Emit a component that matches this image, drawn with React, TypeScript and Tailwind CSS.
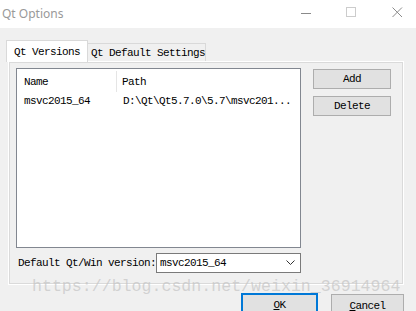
import React from "react";

const mono = "font-['Liberation_Mono',monospace] text-[11px] tracking-[-0.6px] text-black leading-[12px] whitespace-nowrap";

export default function App() {
  return (
    <div className="w-[416px] h-[311px] bg-[#f0f0f0] relative overflow-hidden">
      {/* Title bar */}
      <div className="h-[28px] bg-white flex items-center relative">
        <span className="ml-[2px] font-['Noto_Sans',sans-serif] text-[12px] text-[#999999] leading-none">Qt Options</span>
        <svg className="absolute left-[301px] top-[8px]" width="11" height="11" viewBox="0 0 11 11">
          <line x1="0" y1="5.5" x2="10" y2="5.5" stroke="#8a8a8a" strokeWidth="1" />
        </svg>
        <svg className="absolute left-[346px] top-[7px]" width="11" height="11" viewBox="0 0 11 11">
          <rect x="0.5" y="0.5" width="9" height="9" fill="none" stroke="#cccccc" strokeWidth="1" />
        </svg>
        <svg className="absolute left-[392px] top-[7px]" width="11" height="11" viewBox="0 0 11 11">
          <path d="M0.5 0.5 L10 10 M10 0.5 L0.5 10" stroke="#8a8a8a" strokeWidth="1" fill="none" />
        </svg>
      </div>

      <div className="pt-[12px] pl-[6px]">
        {/* Tabs */}
        <div className="flex items-end h-[22px] relative z-10">
          <div className={`w-[82px] h-[22px] bg-white border border-b-0 border-[#d9d9d9] flex items-center pl-[7px] pt-[1px] ${mono}`}>
            Qt Versions
          </div>
          <div className={`w-[118px] h-[18px] mb-[1px] bg-[#f0f0f0] border border-l-0 border-b-0 border-[#d9d9d9] flex items-center pl-[3px] pt-[1px] ${mono}`}>
            Qt Default Settings
          </div>
        </div>

        {/* Pane */}
        <div className="ml-[2px] mt-[-1px] w-[396px] h-[224px] border border-white outline outline-1 outline-[#dadada] -outline-offset-2 bg-[#f0f0f0] pl-[7px] pt-[6px]">
          <div className="flex">
            <div className="w-[285px] h-[180px] border border-[#828790] bg-white">
              <div className={`flex h-[21px] mt-[2px] items-center ${mono}`}>
                <div className="w-[100px] h-full border-r border-[#e5e5e5] flex items-center pl-[7px]">Name</div>
                <div className="pl-[5px]">Path</div>
              </div>
              <div className={`flex h-[18px] items-center ${mono}`}>
                <div className="w-[101px] pl-[7px]">msvc2015_64</div>
                <div className="pl-[5px]">D:\Qt\Qt5.7.0\5.7\msvc201...</div>
              </div>
            </div>
            <div className="ml-[12px] pt-[1px] flex flex-col gap-[7px]">
              <div className={`w-[78px] h-[20px] bg-[#e1e1e1] border border-[#adadad] flex items-center justify-center ${mono}`}>Add</div>
              <div className={`w-[78px] h-[20px] bg-[#e1e1e1] border border-[#adadad] flex items-center justify-center ${mono}`}>Delete</div>
            </div>
          </div>
          <div className="flex items-center mt-[5px]">
            <div className={`ml-[2px] w-[138px] ${mono}`}>Default Qt/Win version:</div>
            <div className={`w-[145px] h-[20px] bg-white border border-[#7a7a7a] flex items-center justify-between pl-[3px] pr-[5px] ${mono}`}>
              <span>msvc2015_64</span>
              <svg width="9" height="6" viewBox="0 0 9 6">
                <path d="M0.5 0.5 L4.5 4.5 L8.5 0.5" stroke="#333" strokeWidth="1" fill="none" />
              </svg>
            </div>
          </div>
        </div>

        {/* Dialog buttons */}
        <div className="flex items-start mt-[8px]">
          <div className={`ml-[235px] w-[77px] h-[23px] bg-[#e1e1e1] border-2 border-[#0078d7] flex items-center justify-center ${mono}`}>
            <span><span className="underline">O</span>K</span>
          </div>
          <div className={`ml-[13px] mt-[1px] w-[73px] h-[23px] bg-[#e1e1e1] border border-[#adadad] flex items-center justify-center ${mono}`}>
            <span><span className="underline">C</span>ancel</span>
          </div>
        </div>
      </div>

      {/* Watermark */}
      <div className="absolute left-[32px] top-[277px] font-['Liberation_Mono',monospace] text-[16.6px] leading-[20px] text-[#c4c4c4]/70 whitespace-nowrap pointer-events-none z-20">
        https://blog.csdn.net/weixin_36914964
      </div>
    </div>
  );
}
